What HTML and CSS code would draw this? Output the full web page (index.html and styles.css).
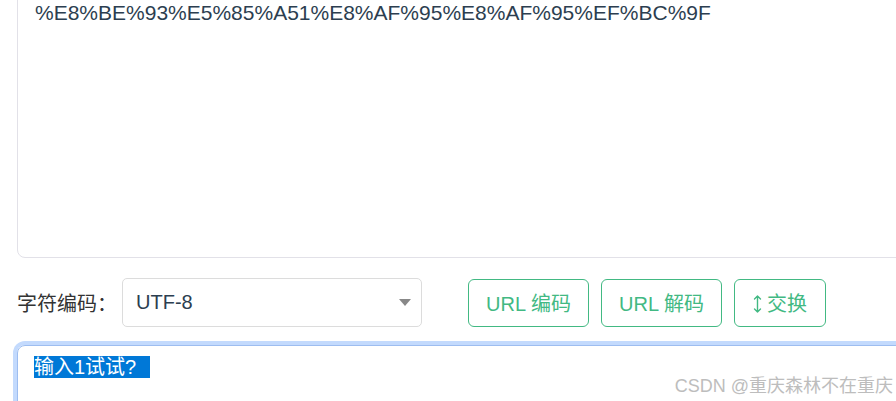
FILE: index.html
```html
<!DOCTYPE html>
<html lang="zh">
<head>
<meta charset="utf-8">
<link rel="stylesheet" href="styles.css">
</head>
<body>
<div class="page">
  <div class="output">%E8%BE%93%E5%85%A51%E8%AF%95%E8%AF%95%EF%BC%9F</div>
  <div class="controls">
    <label class="label">字符编码：</label>
    <div class="select">
      <span>UTF-8</span>
      <span class="caret"></span>
    </div>
    <div class="buttons">
      <button class="btn btn-wide">URL 编码</button>
      <button class="btn btn-wide">URL 解码</button>
      <button class="btn btn-swap"><svg class="swap-icon" width="9" height="20" viewBox="0 0 9 20"><path d="M4.5 2v16M1.5 5l3-3 3 3M1.5 15l3 3 3-3" fill="none" stroke="#42b983" stroke-width="1.4" stroke-linecap="round" stroke-linejoin="round"/></svg>交换</button>
    </div>
  </div>
  <div class="input"><span class="sel">输入1试试?&nbsp;</span></div>
  <div class="watermark">CSDN @重庆森林不在重庆</div>
</div>
</body>
</html>
```
FILE: styles.css
```css
html, body {
  margin: 0;
  padding: 0;
  background: #fff;
  overflow: hidden;
}
body {
  width: 896px;
  height: 401px;
  font-family: "Liberation Sans", "Noto Sans CJK SC", sans-serif;
  color: #2c3e50;
}
.page {
  position: relative;
  height: 401px;
  padding-left: 17px;
  overflow: hidden;
}
.output {
  box-sizing: border-box;
  width: 1000px;
  height: 279px;
  margin-top: -21px;
  border: 1px solid #e2e1e8;
  border-radius: 8px;
  padding: 18px 17px 0;
  font-size: 21px;
  line-height: 30px;
  color: #2c3e50;
}
.controls {
  display: flex;
  align-items: center;
  margin-top: 20px;
  height: 49px;
}
.label {
  font-size: 20px;
  color: #333;
  width: 105px;
}
.select {
  box-sizing: border-box;
  width: 300px;
  height: 49px;
  border: 1px solid #dcdcdc;
  border-radius: 5px;
  display: flex;
  align-items: center;
  justify-content: space-between;
  padding: 0 10px 0 13px;
  font-size: 20px;
  color: #2c3e50;
}
.caret {
  width: 0;
  height: 0;
  border-left: 6px solid transparent;
  border-right: 6px solid transparent;
  border-top: 7px solid #888;
}
.buttons {
  display: flex;
  gap: 12px;
  margin-left: 46px;
}
.btn {
  box-sizing: border-box;
  height: 48px;
  border: 1px solid #42b983;
  border-radius: 6px;
  background: #fff;
  color: #42b983;
  font-family: "Liberation Sans", "Noto Sans CJK SC", sans-serif;
  font-size: 20px;
  display: flex;
  align-items: center;
  justify-content: center;
  padding: 0;
}
.btn-wide { width: 121px; }
.btn-swap { width: 92px; gap: 5px; }
.swap-icon { margin-top: 3px; }
.input {
  box-sizing: border-box;
  width: 1000px;
  height: 100px;
  margin-top: 18px;
  border: 1px solid #9dbdf0;
  box-shadow: 0 0 0 4px #c3dafd;
  border-radius: 8px;
  padding: 8px 16px;
  font-size: 20px;
  line-height: 26px;
}
.sel {
  background: #0078d7;
  color: #fff;
  padding-right: 8px;
}
.watermark {
  position: absolute;
  right: 3px;
  bottom: 4px;
  font-size: 18px;
  color: #bdbdbd;
}
```
